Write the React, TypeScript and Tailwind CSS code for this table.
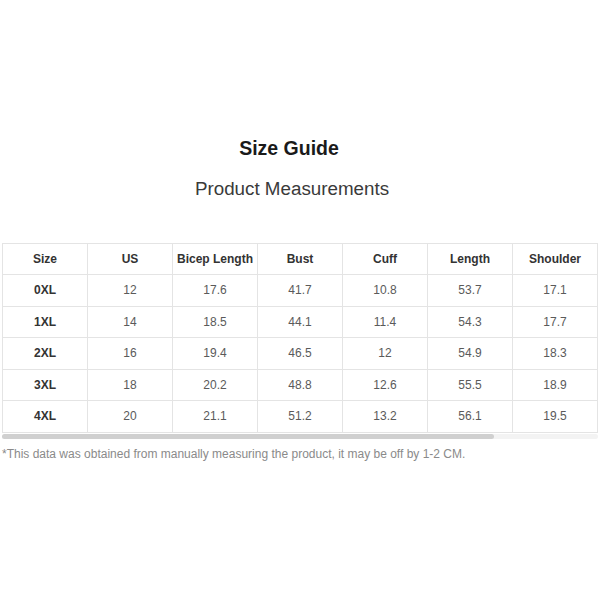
const headers = ["Size", "US", "Bicep Length", "Bust", "Cuff", "Length", "Shoulder"];

const rows = [
  ["0XL", "12", "17.6", "41.7", "10.8", "53.7", "17.1"],
  ["1XL", "14", "18.5", "44.1", "11.4", "54.3", "17.7"],
  ["2XL", "16", "19.4", "46.5", "12", "54.9", "18.3"],
  ["3XL", "18", "20.2", "48.8", "12.6", "55.5", "18.9"],
  ["4XL", "20", "21.1", "51.2", "13.2", "56.1", "19.5"],
];

export default function App() {
  return (
    <div className="h-[600px] w-[600px] bg-white pt-[137px] font-['Liberation_Sans',Arial,sans-serif]">
      <h1 className="pr-[22px] text-center text-[19.5px] font-bold leading-[22px] text-[#1a1a1a]">
        Size Guide
      </h1>
      <h2 className="mt-[19px] pr-[16px] text-center text-[18.8px] leading-[22px] text-[#3a3a3a]">
        Product Measurements
      </h2>

      <div className="mt-[43px] pl-[2px]">
        <table className="w-[596px] table-fixed border-collapse">
          <thead>
            <tr className="h-[31px]">
              {headers.map((h) => (
                <th
                  key={h}
                  className="border border-[#e4e4e4] p-0 text-center text-[12px] font-bold text-[#333]"
                >
                  {h}
                </th>
              ))}
            </tr>
          </thead>
          <tbody>
            {rows.map((r) => (
              <tr key={r[0]} className="h-[31.5px]">
                {r.map((v, i) => (
                  <td
                    key={i}
                    className={
                      i === 0
                        ? "border border-[#e4e4e4] p-0 text-center text-[12px] font-bold text-[#333]"
                        : "border border-[#e4e4e4] p-0 text-center text-[12px] text-[#5a5a5a]"
                    }
                  >
                    {v}
                  </td>
                ))}
              </tr>
            ))}
          </tbody>
        </table>
        {/* scroll bar */}
        <div className="mt-[1px] h-[5px] w-[596px] rounded-full bg-[#f3f3f3]">
          <div className="h-[5px] w-[492px] rounded-full bg-[#d0d0d0]" />
        </div>
      </div>

      <p className="mt-[8px] pl-[2px] text-[12px] leading-[14px] text-[#8a8a8a]">
        *This data was obtained from manually measuring the product, it may be off by 1-2 CM.
      </p>
    </div>
  );
}
